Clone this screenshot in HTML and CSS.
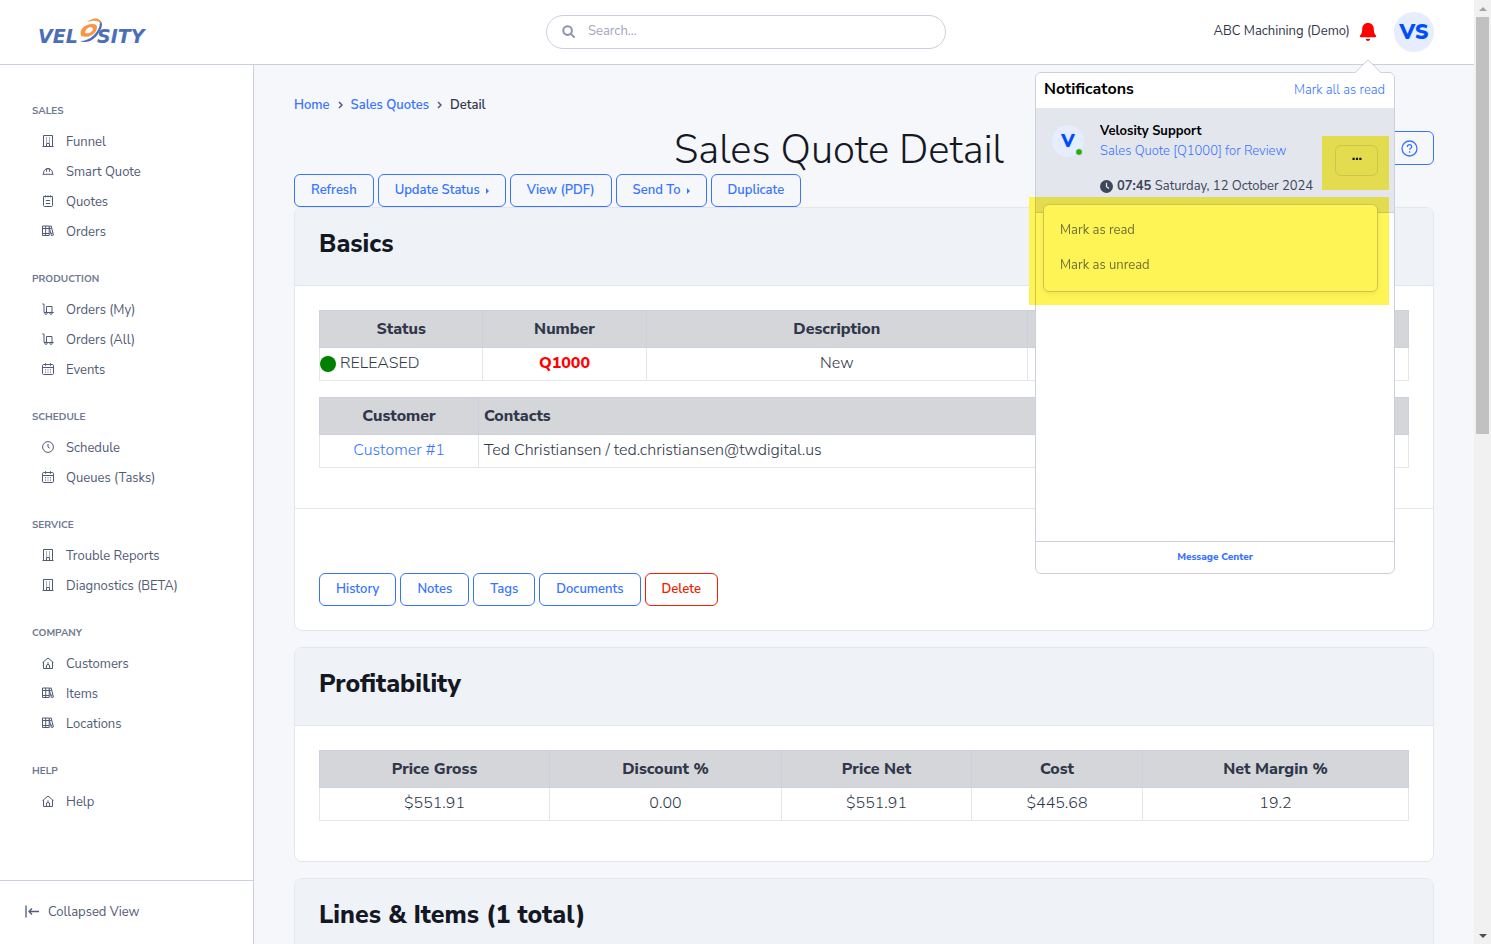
FILE: index.html
```html
<!DOCTYPE html>
<html lang="en">
<head>
<meta charset="utf-8">
<title>Sales Quote Detail</title>
<link rel="stylesheet" href="styles.css">
</head>
<body>
<svg class="sprite" aria-hidden="true">
  <symbol id="building" viewBox="0 0 12 12"><path d="M1.500 11V.500h9V11M.500 11.500h11M4.500 11V8.500h3V11M4 3h1M7 3h1M4 5h1M7 5h1M4 7h1M7 7h1"/></symbol>
  <symbol id="helmet" viewBox="0 0 12 12"><path d="M1.500 8.800V8a4.500 4.500 0 0 1 9 0v.8M.5 9.300h11M4.600 6.800V3.900M7.400 6.800V3.900M4.600 3.700h2.800"/></symbol>
  <symbol id="notes" viewBox="0 0 12 12"><path d="M1.500 1.500h9v9a1 1 0 0 1-1 1h-7a1 1 0 0 1-1-1zM3.500.300v2M6 .300v2M8.500.300v2M3.800 5.500h4.400M3.800 8.500h4.400"/></symbol>
  <symbol id="books" viewBox="0 0 12 12"><path d="M.5 1h6.700v9.500H.5zM3.700 1v9.500M.5 3.500h6.700M.5 8.500h6.700M7.200 1.400l2-.5 2.200 9.100-2 .6-2.200-8M8 3.600l1.800-.5M9 8.400l1.800-.5"/></symbol>
  <symbol id="trolley" viewBox="0 0 12 12"><path d="M.3 1h1.700v8.500h9.700M4.500 3.500h5.500v6H4.500z"/><circle cx="4" cy="10.300" r="1.100"/><circle cx="9" cy="10.300" r="1.100"/></symbol>
  <symbol id="calendar" viewBox="0 0 12 12"><rect x=".5" y="1.500" width="11" height="10" rx="1.200"/><path d="M.5 4.500h11M3.500.200v2.600M8.500.200v2.600M3 6.800h1M5.500 6.800h1M8 6.800h1M3 9.100h1M5.500 9.100h1M8 9.100h1"/></symbol>
  <symbol id="clock" viewBox="0 0 12 12"><circle cx="6" cy="6" r="5.400"/><path d="M6 2.800V6l1.800 1.200"/></symbol>
  <symbol id="home" viewBox="0 0 12 12"><path d="M.6 5.600 6 1l5.400 4.600M1.500 5v6.500h9V5M4.400 11.200V9a1.600 1.600 0 0 1 3.200 0v2.200M5.200 6h1.600"/></symbol>
</svg>

<div class="window">
  <div class="app">
    <header class="topbar">
      <a class="logo" href="#" aria-label="Velosity home">
        <svg width="126" height="32" viewBox="0 0 126 32">
          <g class="logo-text"><text x="6" y="27">VEL</text><text x="65" y="27">SITY</text></g>
          <path d="M65 4c5 1 3 9-3 15-4 4-9 6-14 6 7 3 14-1 18-7 6-8 5-14-1-14z" fill="#4a6fb8"/>
          <path d="M49 20c-2-6 3-12 12-12 4 0 5 3 3 7-3 5-9 7-15 5zm4-3c5 1 7-1 8-4 0-1-1-2-3-2-3 1-5 3-5 6z" fill="#fb9347" fill-rule="evenodd"/>
          <path d="M55 6c6-5 14-5 14 2-2-4-7-4-14-2z" fill="#fb9347"/>
        </svg>
      </a>
      <form class="search" role="search">
        <svg width="14" height="14" viewBox="0 0 14 14" aria-hidden="true"><circle cx="5.600" cy="5.600" r="4.300"/><path d="M8.900 8.900 12.600 12.600"/></svg>
        <input type="search" placeholder="Search..." aria-label="Search">
      </form>
      <div class="account">
        <span>ABC Machining (Demo)</span>
        <button class="bell" aria-label="Notifications"><svg width="18" height="20" viewBox="0 0 18 20"><path d="M9 1c3.600 0 5.800 2.700 5.800 6 0 3.800 1 5.200 2 6.300.8.900.2 1.900-.8 1.900H2c-1 0-1.600-1-.8-1.900 1-1.100 2-2.500 2-6.300 0-3.300 2.200-6 5.800-6zM6.800 17h4.400c0 1.300-1 2-2.200 2s-2.200-.7-2.200-2z" fill="red"/></svg></button>
        <button class="avatar">VS</button>
      </div>

      <section class="popover" aria-label="Notifications">
        <div class="popover-head"><h2>Notificatons</h2><a href="#">Mark all as read</a></div>
        <article class="notice">
          <div class="sender">V<i class="online"></i></div>
          <div class="notice-text">
            <h3>Velosity Support</h3>
            <a href="#">Sales Quote [Q1000] for Review</a>
            <p><svg width="13" height="13" viewBox="0 0 13 13" aria-hidden="true"><circle cx="6.500" cy="6.500" r="6.500" fill="#3e465b"/><path d="M6.500 2.800v3.900L9 8.400" fill="none" stroke="#e3e6ed" stroke-width="1.300"/></svg><span><b>07:45</b> Saturday, 12 October 2024</span></p>
          </div>
          <button class="more" aria-label="More actions"><svg width="10" height="4" viewBox="0 0 10 4"><path d="M.5.700h2.200v2.200H.5zM3.900.700h2.200v2.200H3.900zM7.300.700h2.200v2.200H7.300z" fill="#141824"/></svg></button>
          <div class="menu"><button>Mark as read</button><button>Mark as unread</button></div>
        </article>
        <div class="popover-space"></div>
        <footer><a href="#">Message Center</a></footer>
        <i class="marker marker-more"></i>
        <i class="marker marker-menu"></i>
      </section>
    </header>

    <div class="columns">
      <aside class="sidebar">
        <nav>
          <h2>Sales</h2>
          <a href="#"><svg><use href="#building"/></svg>Funnel</a>
          <a href="#"><svg><use href="#helmet"/></svg>Smart Quote</a>
          <a href="#"><svg><use href="#notes"/></svg>Quotes</a>
          <a href="#"><svg><use href="#books"/></svg>Orders</a>
          <h2>Production</h2>
          <a href="#"><svg><use href="#trolley"/></svg>Orders (My)</a>
          <a href="#"><svg><use href="#trolley"/></svg>Orders (All)</a>
          <a href="#"><svg><use href="#calendar"/></svg>Events</a>
          <h2>Schedule</h2>
          <a href="#"><svg><use href="#clock"/></svg>Schedule</a>
          <a href="#"><svg><use href="#calendar"/></svg>Queues (Tasks)</a>
          <h2>Service</h2>
          <a href="#"><svg><use href="#building"/></svg>Trouble Reports</a>
          <a href="#"><svg><use href="#building"/></svg>Diagnostics (BETA)</a>
          <h2>Company</h2>
          <a href="#"><svg><use href="#home"/></svg>Customers</a>
          <a href="#"><svg><use href="#books"/></svg>Items</a>
          <a href="#"><svg><use href="#books"/></svg>Locations</a>
          <h2>Help</h2>
          <a href="#"><svg><use href="#home"/></svg>Help</a>
        </nav>
        <button class="collapse"><svg width="15" height="13" viewBox="0 0 15 13" aria-hidden="true"><path d="M1 .500v12" stroke="#8b93a9" stroke-width="2"/><path d="M14 6.500H4M7 3.500l-3 3 3 3" stroke="#525b75" stroke-width="1.300" fill="none"/></svg>Collapsed View</button>
      </aside>

      <main>
        <nav class="crumbs" aria-label="Breadcrumb">
          <a href="#">Home</a><svg width="5" height="8" viewBox="0 0 5 8"><path d="M1 1l3 3-3 3"/></svg><a href="#">Sales Quotes</a><svg width="5" height="8" viewBox="0 0 5 8"><path d="M1 1l3 3-3 3"/></svg><span>Detail</span>
        </nav>
        <div class="title-row">
          <h1>Sales Quote Detail</h1>
          <button class="btn help" aria-label="Help"><svg width="17" height="17" viewBox="0 0 17 17"><circle cx="8.500" cy="8.500" r="7.500"/><path d="M6.300 6.900c0-1.400 1-2.200 2.200-2.200s2.200.8 2.200 2c0 1.500-2.100 1.600-2.100 3.100M8.600 11.300v1.400"/></svg></button>
        </div>
        <div class="actions">
          <button class="btn">Refresh</button>
          <button class="btn">Update Status<i class="caret"></i></button>
          <button class="btn">View (PDF)</button>
          <button class="btn">Send To<i class="caret"></i></button>
          <button class="btn">Duplicate</button>
        </div>

        <section class="card">
          <h2>Basics</h2>
          <div class="card-body">
            <table>
              <colgroup><col class="w15"><col class="w15"><col class="w35"><col class="w35"></colgroup>
              <thead><tr><th>Status</th><th>Number</th><th>Description</th><th></th></tr></thead>
              <tbody><tr><td class="status"><i class="dot"></i>RELEASED</td><td class="number">Q1000</td><td>New</td><td></td></tr></tbody>
            </table>
            <table class="contacts">
              <colgroup><col class="customer"><col></colgroup>
              <thead><tr><th>Customer</th><th>Contacts</th></tr></thead>
              <tbody><tr><td><a href="#">Customer #1</a></td><td>Ted Christiansen / ted.christiansen@twdigital.us</td></tr></tbody>
            </table>
          </div>
          <div class="card-foot actions">
            <button class="btn">History</button>
            <button class="btn">Notes</button>
            <button class="btn">Tags</button>
            <button class="btn">Documents</button>
            <button class="btn danger">Delete</button>
          </div>
        </section>

        <section class="card">
          <h2>Profitability</h2>
          <div class="card-body">
            <table>
              <colgroup><col class="gross"><col class="discount"><col class="net"><col class="cost"><col></colgroup>
              <thead><tr><th>Price Gross</th><th>Discount %</th><th>Price Net</th><th>Cost</th><th>Net Margin %</th></tr></thead>
              <tbody><tr><td>$551.91</td><td>0.00</td><td>$551.91</td><td>$445.68</td><td>19.2</td></tr></tbody>
            </table>
          </div>
        </section>

        <section class="card">
          <h2>Lines &amp; Items (1 total)</h2>
          <div class="card-body"></div>
        </section>
      </main>
    </div>
  </div>
  <div class="scrollbar" aria-hidden="true"><i class="up"></i><i class="thumb"></i><i class="down"></i></div>
</div>
</body>
</html>
```
FILE: styles.css
```css
* { box-sizing: border-box; }
body { margin: 0; font: 13px/20px "Nunito Sans", Nunito, Lato, sans-serif; color: #31374a; background: #f5f7fa; }
h1, h2, h3, p { margin: 0; }
a { color: #3874ff; text-decoration: none; }
button { font: inherit; color: inherit; background: none; border: 0; padding: 0; cursor: pointer; }
.sprite { display: none; }

.window { display: flex; height: 100vh; overflow: hidden; }
.app { flex: 1; min-width: 0; display: flex; flex-direction: column; }

.topbar { position: relative; z-index: 2; flex: none; display: grid; grid-template-columns: 1fr 400px 1fr; align-items: center; height: 65px; padding: 0 40px 0 32px; background: #fff; border-bottom: 1px solid #cbd0dd; }
.logo { display: flex; }
.logo-text { font: italic bold 19px "DejaVu Sans", sans-serif; fill: #4a6fb8; }
.search { display: flex; align-items: center; gap: 12px; height: 34px; margin-left: 13px; width: 400px; padding: 0 15px; border: 1px solid #cbd0dd; border-radius: 17px; }
.search svg { flex: none; fill: none; stroke: #8a94ad; stroke-width: 2; }
.search input { flex: 1; min-width: 0; border: 0; outline: 0; padding: 0 0 2px; font: inherit; background: none; color: #31374a; }
.search input::placeholder { color: #9fa6bc; opacity: 1; }
.account { justify-self: end; display: flex; align-items: center; }
.account span { padding-bottom: 2px; }
.bell { display: flex; margin: 0 17px 0 9px; }
.avatar { width: 40px; height: 40px; border-radius: 50%; background: #e5edff; color: #004dff; font-size: 21px; font-weight: 900; }

.popover { position: absolute; top: 72px; right: 79px; width: 360px; background: #fff; border: 1px solid #cbd0dd; border-radius: 6px; color: #141824; }
.popover::before { content: ""; position: absolute; top: -10px; right: 16px; width: 19px; height: 19px; transform: rotate(45deg); background: #fff; border: 1px solid #cbd0dd; border-width: 1px 0 0 1px; border-radius: 2px 0 0 0; }
.popover-head { position: relative; display: flex; justify-content: space-between; align-items: baseline; height: 35px; padding: 6px 9px 0 8px; background: #fff; border-radius: 6px; }
.popover-head h2 { font-size: 16px; font-weight: 700; color: #000; }
.popover-head a, .notice a { font-weight: 300; }
.notice { position: relative; display: flex; padding: 13px 16px 8px; background: #e3e6ed; border-bottom: 1px solid #cbd0dd; }
.sender { position: relative; flex: none; width: 32px; height: 32px; margin: 4px 16px 0 0; border-radius: 50%; background: #e5edff; color: #004dff; font-size: 18px; font-weight: 900; line-height: 32px; text-align: center; }
.online { position: absolute; right: 1px; bottom: 1px; width: 8px; height: 8px; border: 1px solid #e5edff; border-radius: 50%; background: #25b003; }
.notice-text { flex: 1; white-space: nowrap; }
.notice h3 { font-size: 13px; font-weight: 700; color: #000; }
.notice p { display: flex; align-items: center; gap: 4px; margin: 15px 0 8px; color: #3e465b; }
.more { display: flex; align-items: center; justify-content: center; flex: none; align-self: flex-start; width: 43px; height: 31px; margin-top: 24px; padding-bottom: 4px; border: 1px solid #cbd0dd; border-radius: 6px; }
.menu { position: absolute; z-index: 1; top: 96px; left: 7px; right: 16px; padding: 8px 0; border: 1px solid #cbd0dd; border-radius: 6px; background: #fff; box-shadow: 0 2px 5px #0001; }
.menu button { display: block; width: 100%; height: 35px; padding: 0 16px 2px; text-align: left; color: #6e7891; }
.popover-space { height: 328px; }
.popover footer { height: 32px; border-top: 1px solid #cbd0dd; text-align: center; font-size: 10px; font-weight: 800; line-height: 30px; }
.marker { position: absolute; z-index: 2; background: #fff455; mix-blend-mode: multiply; pointer-events: none; }
.marker-more { top: 63px; right: 5px; width: 67px; height: 54px; }
.marker-menu { top: 124px; left: -7px; right: 5px; height: 108px; }

.columns { flex: 1; min-height: 0; display: flex; }
.sidebar { flex: none; width: 254px; display: flex; flex-direction: column; background: #fff; border-right: 1px solid #cbd0dd; color: #525b75; }
.sidebar nav { flex: 1; padding: 14px 32px 0; }
.sidebar h2 { margin-top: 16px; font-size: 10px; font-weight: 700; line-height: 32px; text-transform: uppercase; color: #6e7891; }
.sidebar nav a { display: flex; align-items: center; gap: 12px; height: 30px; padding-left: 10px; color: #525b75; }
.sidebar nav svg { width: 12px; height: 12px; margin-bottom: 2px; fill: none; stroke: #525b75; stroke-width: 1; }
.collapse { display: flex; align-items: center; gap: 8px; height: 64px; padding: 0 25px 2px; border-top: 1px solid #cbd0dd; }

main { flex: 1; min-width: 0; padding: 30px 40px 0; overflow: hidden; }
.crumbs { display: flex; align-items: center; gap: 8px; font-weight: 600; }
.crumbs svg { flex: none; fill: none; stroke: #525b75; stroke-width: 1.5; }
.title-row { display: flex; align-items: flex-start; margin-top: 12px; }
h1 { flex: 1; text-align: center; font-size: 40px; font-weight: 300; line-height: 47px; color: #141824; }
.actions { display: flex; gap: 4px; }
.btn { display: flex; align-items: center; height: 33px; padding: 0 16px 2px; border: 1px solid #3874ff; border-radius: 6px; color: #3874ff; font-weight: 600; }
.help { width: 50px; height: 34px; margin-top: 4px; padding: 0 16px; }
.help svg { flex: none; fill: none; stroke: #3874ff; stroke-width: 1.3; }
.danger { border-color: #ed2000; color: #ed2000; }
.caret { margin: 2px 0 0 6px; border: 3px solid transparent; border-left-color: #3874ff; border-right: 0; }

.card { margin-bottom: 16px; border: 1px solid #e3e6ed; border-radius: 8px; background: #fff; overflow: hidden; }
.card h2 { padding: 20px 24px 25px; font-size: 25px; font-weight: 800; line-height: 32px; color: #141824; background: #eff2f6; border-bottom: 1px solid #e3e6ed; }
.card-body { padding: 24px; }
.card-foot { padding: 64px 24px 24px; border-top: 1px solid #e3e6ed; }
table { width: 100%; margin-bottom: 16px; table-layout: fixed; border-collapse: collapse; font-size: 16px; line-height: 24px; text-align: center; }
th { height: 37px; padding: 6px 4px; background: #d4d6d9; border: 1px solid #cbd0dd; font-weight: 800; }
td { height: 33px; padding: 3px 4px 5px; border: 1px solid #e3e6ed; font-weight: 300; }
.w15 { width: 15%; }
.w35 { width: 35%; }
.customer { width: 159px; }
.contacts th + th, .contacts td + td { padding-left: 5px; text-align: left; }
.gross { width: 230px; }
.discount { width: 232px; }
.net { width: 190px; }
.cost { width: 171px; }
.status { padding-left: 0; text-align: left; }
.dot { display: inline-block; width: 16px; height: 16px; margin-right: 4px; border-radius: 50%; background: green; vertical-align: -4px; }
.number { color: red; font-weight: 800; }

.scrollbar { flex: none; display: flex; flex-direction: column; align-items: center; width: 17px; background: #f1f1f1; }
.thumb { width: 13px; height: 417px; background: #c1c1c1; }
.up, .down { border: 4px solid transparent; }
.up { margin: 7px 0 6px; border-top: 0; border-bottom-color: #a3a3a3; }
.down { margin: auto 0 6px; border-bottom: 0; border-top-color: #505050; }
```
